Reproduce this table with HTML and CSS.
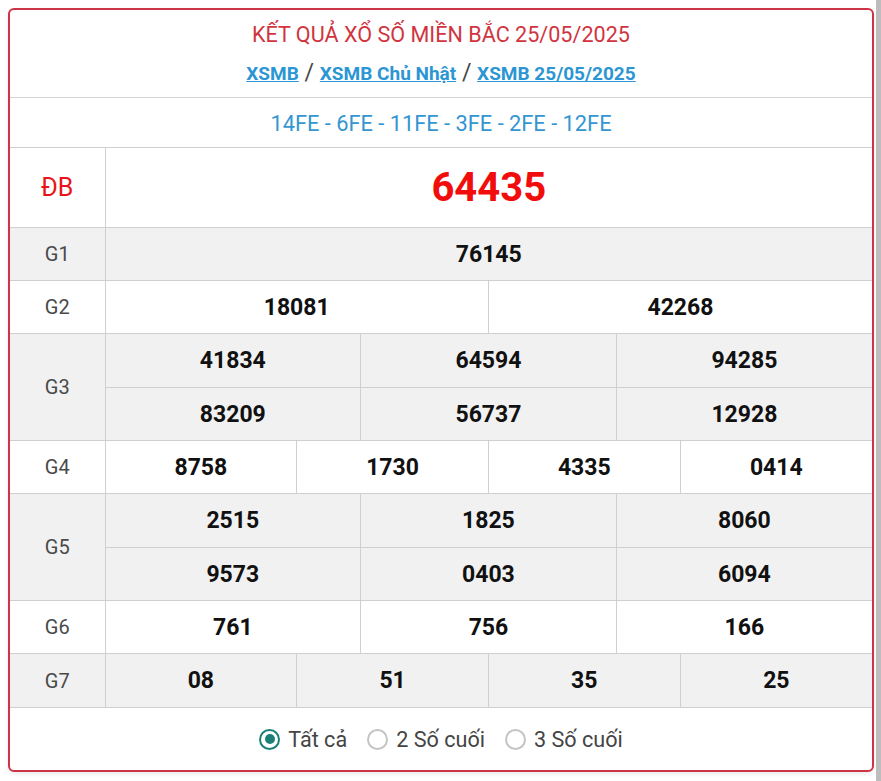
FILE: index.html
```html
<!DOCTYPE html>
<html lang="vi">
<head>
<meta charset="utf-8">
<title>XSMB 25/05/2025</title>
<link rel="stylesheet" href="styles.css">
</head>
<body>
<div class="page">
  <div class="card">
    <div class="head">
      <h1 class="title">KẾT QUẢ XỔ SỐ MIỀN BẮC 25/05/2025</h1>
      <div class="links"><a href="#">XSMB</a> <span class="sep">/</span> <a href="#">XSMB Chủ Nhật</a> <span class="sep">/</span> <a href="#">XSMB 25/05/2025</a></div>
    </div>
    <div class="codes">14FE - 6FE - 11FE - 3FE - 2FE - 12FE</div>
    <table class="res">
      <colgroup>
        <col class="c-label">
        <col span="12">
      </colgroup>
      <tr class="db">
        <td class="lbl red">ĐB</td>
        <td colspan="12" class="num big">64435</td>
      </tr>
      <tr class="alt">
        <td class="lbl">G1</td>
        <td colspan="12" class="num">76145</td>
      </tr>
      <tr>
        <td class="lbl">G2</td>
        <td colspan="6" class="num">18081</td>
        <td colspan="6" class="num">42268</td>
      </tr>
      <tr class="alt h54">
        <td class="lbl" rowspan="2">G3</td>
        <td colspan="4" class="num">41834</td>
        <td colspan="4" class="num">64594</td>
        <td colspan="4" class="num">94285</td>
      </tr>
      <tr class="alt">
        <td colspan="4" class="num">83209</td>
        <td colspan="4" class="num">56737</td>
        <td colspan="4" class="num">12928</td>
      </tr>
      <tr>
        <td class="lbl">G4</td>
        <td colspan="3" class="num">8758</td>
        <td colspan="3" class="num">1730</td>
        <td colspan="3" class="num">4335</td>
        <td colspan="3" class="num">0414</td>
      </tr>
      <tr class="alt h54">
        <td class="lbl" rowspan="2">G5</td>
        <td colspan="4" class="num">2515</td>
        <td colspan="4" class="num">1825</td>
        <td colspan="4" class="num">8060</td>
      </tr>
      <tr class="alt">
        <td colspan="4" class="num">9573</td>
        <td colspan="4" class="num">0403</td>
        <td colspan="4" class="num">6094</td>
      </tr>
      <tr>
        <td class="lbl">G6</td>
        <td colspan="4" class="num">761</td>
        <td colspan="4" class="num">756</td>
        <td colspan="4" class="num">166</td>
      </tr>
      <tr class="alt h54">
        <td class="lbl">G7</td>
        <td colspan="3" class="num">08</td>
        <td colspan="3" class="num">51</td>
        <td colspan="3" class="num">35</td>
        <td colspan="3" class="num">25</td>
      </tr>
    </table>
    <div class="filter">
      <label class="opt"><span class="radio on"></span>Tất cả</label>
      <label class="opt"><span class="radio"></span>2 Số cuối</label>
      <label class="opt"><span class="radio"></span>3 Số cuối</label>
    </div>
  </div>
  <div class="scroll"></div>
</div>
</body>
</html>
```
FILE: styles.css
```css
html, body {
  margin: 0;
  padding: 0;
  background: #fff;
}
body {
  font-family: Roboto, "Liberation Sans", Arial, sans-serif;
  color: #222;
}
.page {
  display: flex;
  align-items: flex-start;
  height: 781px;
}
.card {
  box-sizing: border-box;
  width: 866px;
  height: 764px;
  margin: 8px 0 0 8px;
  border: 2px solid #cc3545;
  border-radius: 6px;
  background: #fff;
  box-shadow: 0 2px 4px rgba(0,0,0,0.08);
  overflow: hidden;
}
.scroll {
  width: 5px;
  height: 781px;
  background: #bdbdbd;
  margin-left: auto;
}
.head {
  height: 88px;
  border-bottom: 1px solid #d4d4d4;
  text-align: center;
  box-sizing: border-box;
  padding-top: 12px;
}
.title {
  margin: 0;
  font-size: 21.6px;
  font-weight: 400;
  line-height: 26px;
  color: #d1343f;
}
.links {
  margin-top: 13px;
  font-size: 19px;
  font-weight: 700;
  line-height: 24px;
}
.links a {
  color: #2b96d3;
  text-decoration: underline;
}
.sep {
  color: #444;
  font-weight: 400;
  font-size: 23px;
  margin: 0 1px;
}
.codes {
  height: 49px;
  line-height: 51px;
  text-align: center;
  font-size: 21.8px;
  color: #3496d1;
}
.res {
  width: 862px;
  border-collapse: collapse;
  border-style: hidden;
  table-layout: fixed;
  border-top: 1px solid #cfcfcf;
}
.res td {
  border: 1px solid #cfcfcf;
  text-align: center;
  padding: 0;
  height: 52px;
}
.c-label {
  width: 95px;
}
.res tr.db td {
  height: 79px;
}
.res tr.h54 td {
  height: 53px;
}
.res tr.alt td {
  background: #f1f1f1;
}
.lbl {
  font-size: 20px;
  color: #4a4a4a;
}
.lbl.red {
  color: #e8141a;
  font-size: 25px;
}
.num {
  font-size: 23px;
  font-weight: 700;
  color: #111;
}
.num.big {
  font-size: 40px;
  color: #f20d0d;
}
.filter {
  display: flex;
  justify-content: center;
  align-items: center;
  gap: 20px;
  height: 63px;
  border-top: 1px solid #cfcfcf;
  box-sizing: border-box;
  font-size: 21.6px;
  color: #444;
}
.opt {
  display: flex;
  align-items: center;
  gap: 8px;
}
.radio {
  box-sizing: border-box;
  width: 21px;
  height: 21px;
  border-radius: 50%;
  border: 2px solid #c4c4c4;
  display: inline-block;
  position: relative;
}
.radio.on {
  border-color: #1a8077;
}
.radio.on::after {
  content: "";
  position: absolute;
  left: 3.5px;
  top: 3.5px;
  width: 10px;
  height: 10px;
  border-radius: 50%;
  background: #1a8077;
}
```
